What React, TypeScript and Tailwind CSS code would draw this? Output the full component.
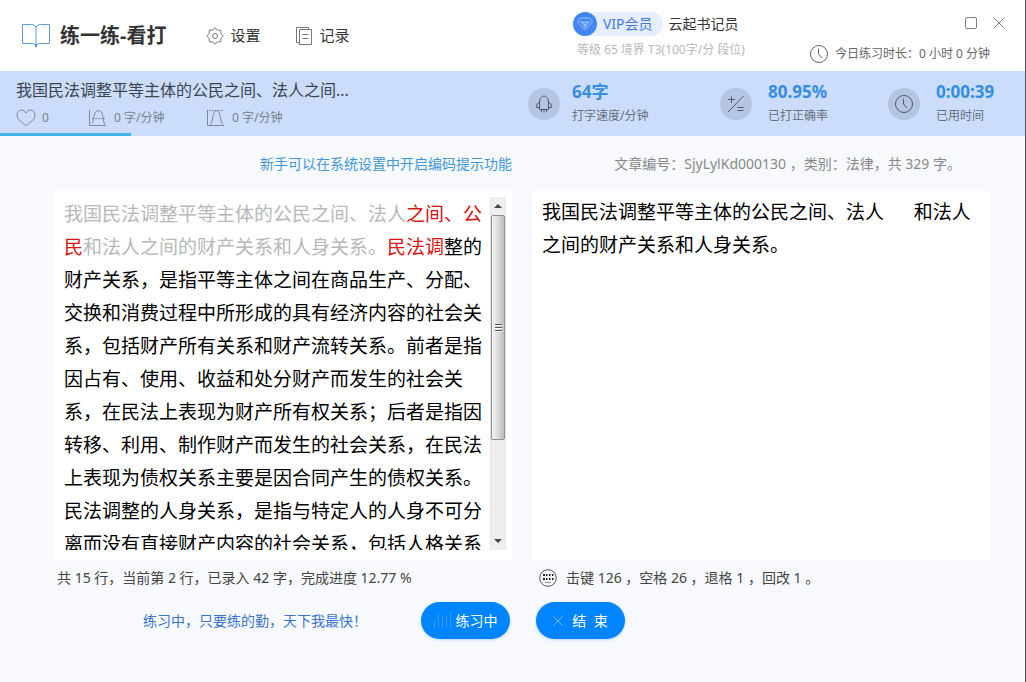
import React, { useState } from 'react';

interface IconProps {
  className?: string;
}

function BookIcon({ className = '' }: IconProps) {
  return (
    <svg viewBox="0 0 28 26" fill="none" stroke="#5b9be0" strokeWidth="1" className={className}>
      <path d="M14 4.5V22M14 4.5C13 2 11 1.500 9.500 1.500V1.500H.500V20.500H10.500C12.500 20.500 13.500 21.500 14 23.500C14.500 21.500 15.500 20.500 17.500 20.500H27.500V1.500H18.500C17 1.500 15 2 14 4.500" />
      <path d="M5.500 1.500V3M22.500 1.500V3" stroke="#a9c9ef" />
      <path d="M12.500 21.500H15.500L14 25Z" fill="#3f7fd0" stroke="none" />
    </svg>
  );
}

function GearIcon({ className = '' }: IconProps) {
  return (
    <svg viewBox="0 0 18 18" fill="none" stroke="#777" strokeWidth="1" strokeLinejoin="round" className={className}>
      <path d="M9 .7L11.200 3.100L14.700 3.100L14.900 6.600L17.300 9L14.900 11.400L14.700 14.900L11.200 14.900L9 17.300L6.800 14.900L3.300 14.900L3.100 11.400L.7 9L3.100 6.600L3.300 3.100L6.800 3.100Z" />
      <circle cx="9" cy="9" r="2.500" />
    </svg>
  );
}

function RecordIcon({ className = '' }: IconProps) {
  return (
    <svg viewBox="0 0 16 18" fill="none" stroke="#777" strokeWidth="1" className={className}>
      <path d="M3.500 15.500H.500V.500H12.500V2.500" />
      <path d="M3.500 2.500H15.500V17.500H3.500Z" />
      <path d="M6.500 7.500H12.500M6.500 11.500H12.500" />
    </svg>
  );
}

function DiamondIcon({ className = '' }: IconProps) {
  return (
    <svg viewBox="0 0 16 14" fill="none" stroke="#b4d0fd" strokeWidth="0.800" strokeLinejoin="round" className={className}>
      <path d="M3.500 1H12.500L15.500 5L8 13.300L.5 5Z" />
      <path d="M3 5H13M4.500 5L8 11L11.500 5M6.500 5L8 9L9.500 5" />
    </svg>
  );
}

function ClockIcon({ className = '' }: IconProps) {
  return (
    <svg viewBox="0 0 20 20" fill="none" stroke="currentColor" strokeWidth="1" className={className}>
      <circle cx="10" cy="10" r="8.500" />
      <path d="M9.500 4.500V10L13 14" />
    </svg>
  );
}

function HeartIcon({ className = '' }: IconProps) {
  return (
    <svg viewBox="0 0 20 18" fill="none" stroke="#7d8797" strokeWidth="1" className={className}>
      <path d="M10 16.500C6 13.500 1 10.500 1 6C1 3 3 1 5.500 1C7.500 1 9.200 2.200 10 4C10.800 2.200 12.500 1 14.500 1C17 1 19 3 19 6C19 10.500 14 13.500 10 16.500Z" />
    </svg>
  );
}

function AverageIcon({ className = '' }: IconProps) {
  return (
    <svg viewBox="0 0 17 17" fill="none" stroke="#7d8797" strokeWidth="1" className={className}>
      <path d="M.5 0V15.500H17" />
      <path d="M3 13.500C5 12 4 .5 9.500 .5C15 .5 13.500 12 16 14.500" />
      <path d="M3 8.500H16" strokeDasharray="2 1" />
    </svg>
  );
}

function PeakIcon({ className = '' }: IconProps) {
  return (
    <svg viewBox="0 0 17 17" fill="none" stroke="#7d8797" strokeWidth="1" className={className}>
      <path d="M.5 0V15.500H17" />
      <path d="M3.500 14.500C6 12 5.500 .5 9.500 .5C13.500 .5 13 12 16 14.500" />
      <path d="M2 .5H16" strokeDasharray="2 1" />
    </svg>
  );
}

function RocketIcon({ className = '' }: IconProps) {
  return (
    <svg viewBox="0 0 18 18" fill="none" stroke="#4d5a6e" strokeWidth="1" className={className}>
      <path d="M4.500 14.500V7C4.500 4 6.500 1.500 9 .8C11.500 1.500 13.500 4 13.500 7V14.500Z" />
      <path d="M4.500 7.500C2.500 8 1.500 9.500 1.500 12.500H4.500M13.500 7.500C15.500 8 16.500 9.500 16.500 12.500H13.500" />
      <path d="M6.500 15V17M9 15V17.500M11.500 15V17" />
    </svg>
  );
}

function PlusMinusIcon({ className = '' }: IconProps) {
  return (
    <svg viewBox="0 0 18 18" fill="none" stroke="#4d5a6e" strokeWidth="1" className={className}>
      <path d="M1 17L16.500 1M4.500 1.500V8M1 4.500H8M10.500 12.500H16.500M10.500 15.500H16.500" />
    </svg>
  );
}

function KeyboardIcon({ className = '' }: IconProps) {
  return (
    <svg viewBox="0 0 18 18" className={className}>
      <circle cx="9" cy="9" r="8.300" fill="none" stroke="#555" />
      <path d="M4 5H6V7H4ZM7 5H8.500V7H7ZM10 5H11.500V7H10ZM13 5H14.500V7H13ZM4 9H6V11H4ZM7 9H8.500V11H7ZM10 9H11.500V11H10ZM13 9H14.500V11H13Z" fill="#222" />
      <path d="M6 13.500H12" stroke="#888" />
    </svg>
  );
}

function BarsIcon({ className = '' }: IconProps) {
  return (
    <svg viewBox="0 0 18 17" fill="none" stroke="#2f97ff" strokeWidth="1" className={className}>
      <path d="M.5 9V16M4.500 1V16M8.500 4V16M12.500 5V16M16.500 0V16" />
    </svg>
  );
}

function CrossIcon({ className = '' }: IconProps) {
  return (
    <svg viewBox="0 0 12 12" fill="none" stroke="currentColor" strokeWidth="1" className={className}>
      <path d="M.5 .5L11.500 11.500M11.500 .5L.5 11.500" />
    </svg>
  );
}

type SegmentState = 'done' | 'wrong' | 'todo';

const segments: { text: string; state: SegmentState }[] = [
  { text: '我国民法调整平等主体的公民之间、法人', state: 'done' },
  { text: '之间、公民', state: 'wrong' },
  { text: '和法人之间的财产关系和人身关系。', state: 'done' },
  { text: '民法调', state: 'wrong' },
  {
    text: '整的财产关系，是指平等主体之间在商品生产、分配、交换和消费过程中所形成的具有经济内容的社会关系，包括财产所有关系和财产流转关系。前者是指因占有、使用、收益和处分财产而发生的社会关系，在民法上表现为财产所有权关系；后者是指因转移、利用、制作财产而发生的社会关系，在民法上表现为债权关系主要是因合同产生的债权关系。民法调整的人身关系，是指与特定人的人身不可分离而没有直接财产内容的社会关系，包括人格关系',
    state: 'todo'
  }
];

const segmentColors: Record<SegmentState, string> = {
  done: 'text-[#b8b8b8]',
  wrong: 'text-[#d81414]',
  todo: 'text-black'
};

const progress = 12.77;

interface StatProps {
  icon: React.ReactNode;
  value: string;
  label: string;
  className?: string;
}

function Stat({ icon, value, label, className = '' }: StatProps) {
  return (
    <div className={`flex items-center ${className}`}>
      <div className="flex size-8 shrink-0 items-center justify-center rounded-full bg-[#b4c6e2]">
        {icon}
      </div>
      <div className="whitespace-nowrap">
        <div className="text-[17px] leading-6 font-bold text-[#348de0]">{value}</div>
        <div className="text-xs leading-6 text-[#666f7c]">{label}</div>
      </div>
    </div>
  );
}

function Header() {
  return (
    <header className="flex h-[71px] shrink-0 justify-between bg-white whitespace-nowrap">
      <div className="flex items-center pl-[22px]">
        <BookIcon className="h-[26px] w-7" />
        <h1 className="ml-[10px] text-xl font-bold text-[#333]">练一练-看打</h1>
        <nav className="ml-10 flex items-center gap-9 text-[15px] text-[#333]">
          <button type="button" className="flex items-center gap-[6px]">
            <GearIcon className="size-[18px]" />
            设置
          </button>
          <button type="button" className="flex items-center gap-[7px]">
            <RecordIcon className="h-[18px] w-4" />
            记录
          </button>
        </nav>
      </div>

      <div className="flex">
        <div className="w-[236px] pt-3">
          <div className="flex items-center gap-[6px]">
            <div className="flex h-6 items-center gap-[6px] rounded-full bg-[#e6edfd] pr-[10px] text-sm text-[#3f7be0]">
              <span className="flex size-6 items-center justify-center rounded-full bg-[#4285f4]">
                <DiamondIcon className="h-[14px] w-4" />
              </span>
              VIP会员
            </div>
            <span className="text-sm text-[#333]">云起书记员</span>
          </div>
          <p className="mt-1 pl-1 text-xs leading-5 text-[#b8b8b8]">等级 65 境界 T3(100字/分 段位)</p>
        </div>

        <div className="flex flex-col items-end pt-4 pr-5">
          <div className="flex h-[14px] items-center gap-4 text-[#777f8c]">
            <button type="button" aria-label="最大化" className="size-3 rounded-[2px] border border-current" />
            <button type="button" aria-label="关闭">
              <CrossIcon className="size-3" />
            </button>
          </div>
          <div className="mt-3 flex items-center gap-[6px] pr-[15px] text-xs leading-6 text-[#666]">
            <ClockIcon className="size-5" />
            今日练习时长：0 小时 0 分钟
          </div>
        </div>
      </div>
    </header>
  );
}

function SummaryBar() {
  return (
    <section className="shrink-0 bg-[#cbddfb]">
      <div className="flex h-[62px] justify-between whitespace-nowrap">
        <div className="pt-[7px] pl-4">
          <h2 className="text-base leading-6 text-[#3c4450]">我国民法调整平等主体的公民之间、法人之间...</h2>
          <div className="mt-1 flex items-center text-xs leading-6 text-[#76808f]">
            <span className="flex w-[73px] items-center gap-[6px]">
              <HeartIcon className="h-[18px] w-5" />0
            </span>
            <span className="flex w-[118px] items-center gap-2">
              <AverageIcon className="size-[17px]" />0 字/分钟
            </span>
            <span className="flex items-center gap-2">
              <PeakIcon className="size-[17px]" />0 字/分钟
            </span>
          </div>
        </div>
        <div className="flex pt-1">
          <Stat className="w-48 gap-3" icon={<RocketIcon className="size-[18px]" />} value="64字" label="打字速度/分钟" />
          <Stat className="w-42 gap-4" icon={<PlusMinusIcon className="size-[18px]" />} value="80.95%" label="已打正确率" />
          <Stat
            className="w-[137px] gap-4"
            icon={<ClockIcon className="size-5 text-[#4d5a6e]" />}
            value="0:00:39"
            label="已用时间"
          />
        </div>
      </div>
      <div className="h-[3px] bg-[#42b4e6]" style={{ width: `${progress}%` }} />
    </section>
  );
}

function ScrollBar() {
  return (
    <div className="flex w-4 shrink-0 flex-col border-x border-[#e6e6e6] bg-[#efefef]">
      <button type="button" aria-label="向上滚动" className="flex h-[18px] shrink-0 items-center justify-center">
        <svg viewBox="0 0 8 4" className="h-1 w-2">
          <path d="M0 4L4 0L8 4Z" fill="#444" />
        </svg>
      </button>
      <div className="flex-1">
        <div className="flex h-[71%] flex-col items-center justify-center gap-px rounded-[2px] border border-[#8f8f8f] bg-linear-to-r from-[#f4f4f4] via-[#dcdcde] to-[#bdbdc1]">
          <span className="h-[2px] w-[7px] border-t border-[#555] bg-white" />
          <span className="h-[2px] w-[7px] border-t border-[#555] bg-white" />
          <span className="h-[2px] w-[7px] border-t border-[#555] bg-white" />
        </div>
      </div>
      <button type="button" aria-label="向下滚动" className="flex h-[18px] shrink-0 items-center justify-center">
        <svg viewBox="0 0 8 4" className="h-1 w-2">
          <path d="M0 0L4 4L8 0Z" fill="#444" />
        </svg>
      </button>
    </div>
  );
}

export default function App() {
  const [typed, setTyped] = useState('我国民法调整平等主体的公民之间、法人      和法人之间的财产关系和人身关系。');

  return (
    <div className="flex h-screen flex-col overflow-hidden border-r border-[#55555c] bg-[#f7f9fc] font-['Noto_Sans','Noto_Sans_CJK_SC',sans-serif]">
      <Header />
      <SummaryBar />

      <main className="grid min-h-0 flex-1 grid-cols-2 gap-x-5 pr-[34px] pl-[53px]">
        <section className="flex min-h-0 flex-col">
          <p className="h-[55px] shrink-0 text-right text-sm leading-[55px] text-[#3f97d8]">
            新手可以在系统设置中开启编码提示功能
          </p>
          <div className="flex min-h-0 flex-1 bg-white pt-[6px] pr-[6px] pb-[10px] pl-[11px]">
            <div className="flex-1 overflow-hidden pt-px pr-1 text-[19px] leading-[33px]">
              {segments.map((segment, index) => (
                <span key={index} className={segmentColors[segment.state]}>
                  {segment.text}
                </span>
              ))}
            </div>
            <ScrollBar />
          </div>
          <p className="h-9 shrink-0 pl-1 text-sm leading-9 text-[#444]">
            共 15 行，当前第 2 行，已录入 42 字，完成进度 {progress} %
          </p>
          <div className="flex h-[86px] shrink-0 items-start justify-end gap-[54px] pt-[6px] pr-[2px]">
            <p className="text-sm leading-[37px] text-[#3a74cf]">练习中，只要练的勤，天下我最快！</p>
            <button
              type="button"
              className="flex h-[37px] w-[89px] items-center justify-center gap-1 rounded-full bg-[#0085ff] text-sm text-white shadow-sm shadow-blue-200"
            >
              <BarsIcon className="h-[17px] w-[18px]" />
              练习中
            </button>
          </div>
        </section>

        <section className="flex min-h-0 flex-col">
          <p className="h-[55px] shrink-0 pr-[30px] text-right text-sm leading-[55px] text-[#888]">
            文章编号：SjyLylKd000130 ，类别：法律，共 329 字。
          </p>
          <textarea
            aria-label="录入区"
            spellCheck={false}
            value={typed}
            onChange={(e) => setTyped(e.target.value)}
            className="min-h-0 flex-1 resize-none bg-white px-[10px] pt-[5px] text-[19px] leading-[33px] text-black outline-none"
          />
          <div className="flex h-9 shrink-0 items-center gap-[9px] pl-[7px] text-sm text-[#444]">
            <KeyboardIcon className="size-[18px]" />
            击键 126 ，空格 26 ，退格 1 ，回改 1 。
          </div>
          <div className="h-[86px] shrink-0 pt-[6px] pl-1">
            <button
              type="button"
              className="flex h-[37px] w-[89px] items-center justify-center gap-[9px] rounded-full bg-[#0085ff] text-sm text-white shadow-sm shadow-blue-200"
            >
              <CrossIcon className="size-[10px] text-[#8cc6ff]" />
              <span className="whitespace-pre">结  束</span>
            </button>
          </div>
        </section>
      </main>
    </div>
  );
}
